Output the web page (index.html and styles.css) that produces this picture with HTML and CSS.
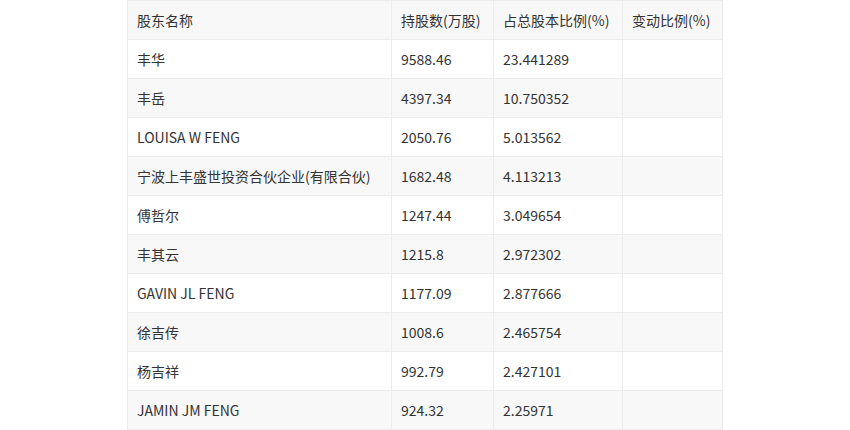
FILE: index.html
```html
<!DOCTYPE html>
<html>
<head>
<meta charset="utf-8">
<link rel="stylesheet" href="styles.css">
</head>
<body>
<table class="holders">
  <colgroup>
    <col class="c1"><col class="c2"><col class="c3"><col class="c4">
  </colgroup>
  <thead>
    <tr><th>股东名称</th><th>持股数(万股)</th><th>占总股本比例(%)</th><th>变动比例(%)</th></tr>
  </thead>
  <tbody>
    <tr><td>丰华</td><td>9588.46</td><td>23.441289</td><td></td></tr>
    <tr><td>丰岳</td><td>4397.34</td><td>10.750352</td><td></td></tr>
    <tr><td>LOUISA W FENG</td><td>2050.76</td><td>5.013562</td><td></td></tr>
    <tr><td>宁波上丰盛世投资合伙企业(有限合伙)</td><td>1682.48</td><td>4.113213</td><td></td></tr>
    <tr><td>傅哲尔</td><td>1247.44</td><td>3.049654</td><td></td></tr>
    <tr><td>丰其云</td><td>1215.8</td><td>2.972302</td><td></td></tr>
    <tr><td>GAVIN JL FENG</td><td>1177.09</td><td>2.877666</td><td></td></tr>
    <tr><td>徐吉传</td><td>1008.6</td><td>2.465754</td><td></td></tr>
    <tr><td>杨吉祥</td><td>992.79</td><td>2.427101</td><td></td></tr>
    <tr><td>JAMIN JM FENG</td><td>924.32</td><td>2.25971</td><td></td></tr>
  </tbody>
</table>
</body>
</html>
```
FILE: styles.css
```css
html, body {
  margin: 0;
  padding: 0;
  background: #ffffff;
}
body {
  font-family: "Noto Sans CJK SC", "Noto Sans", sans-serif;
  font-size: 14px;
  color: #333333;
}
.holders {
  border-collapse: collapse;
  width: 595px;
  margin: 0 auto;
  table-layout: fixed;
}
.c1 { width: 264px; }
.c2 { width: 102px; }
.c3 { width: 129px; }
.c4 { width: 100px; }
.holders th,
.holders td {
  border: 1px solid #ececec;
  height: 39px;
  padding: 0 9px;
  text-align: left;
  font-weight: normal;
  white-space: nowrap;
  box-sizing: border-box;
  line-height: 20px;
}
.holders thead th {
  background: #f8f8f8;
}
.holders tbody tr:nth-child(even) td {
  background: #f8f8f8;
}
```
